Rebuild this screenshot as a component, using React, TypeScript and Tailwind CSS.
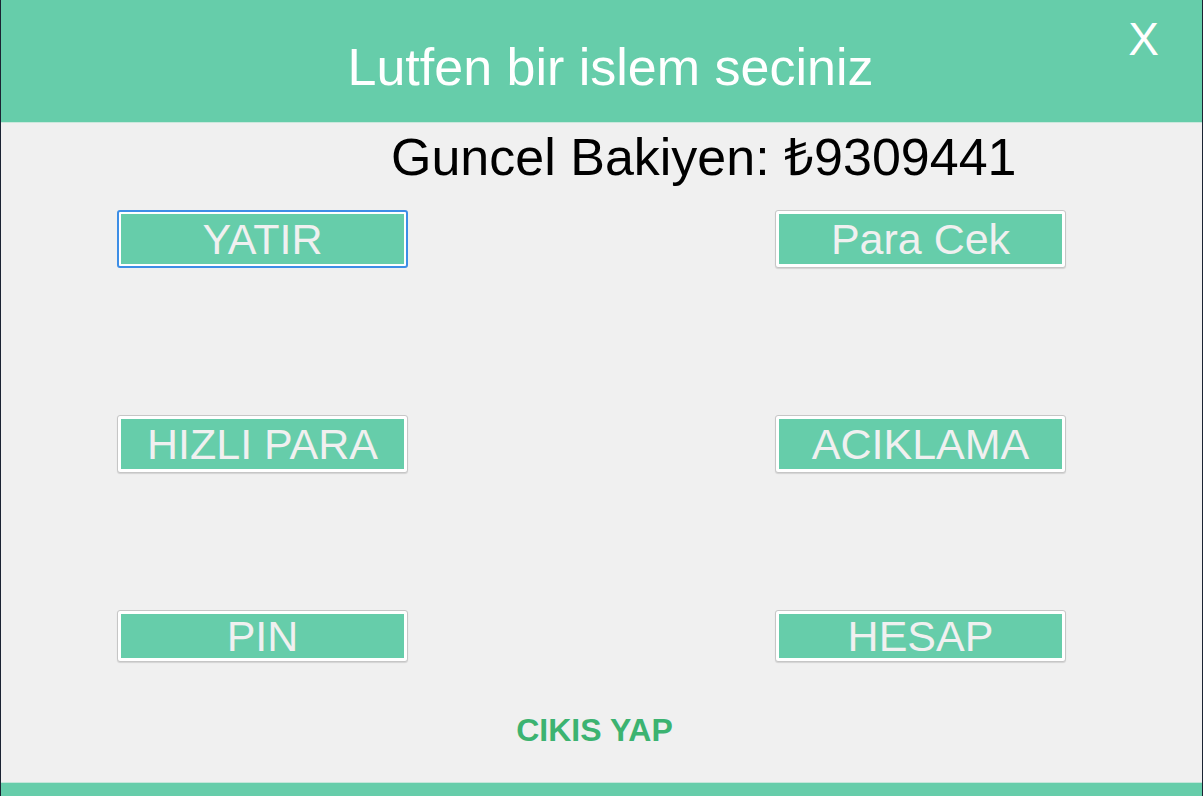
const actions = [
  [
    { label: 'YATIR', focused: true },
    { label: 'Para Cek', focused: false },
  ],
  [
    { label: 'HIZLI PARA', focused: false },
    { label: 'ACIKLAMA', focused: false },
  ],
  [
    { label: 'PIN', focused: false },
    { label: 'HESAP', focused: false },
  ],
]

const MenuButton = ({ label, focused, short }: { label: string; focused: boolean; short?: boolean }) => {
  return (
    <button
      className={
        focused
          ? 'w-[291px] rounded-[3px] border-2 border-[#3d8ee6] bg-white p-[2px] ' + (short ? 'h-[52px]' : 'h-[58px]')
          : 'w-[291px] rounded-[3px] border border-[#c6c6c6] bg-white p-[3px] shadow-[0_1px_1px_rgba(0,0,0,0.12)] ' + (short ? 'h-[52px]' : 'h-[58px]')
      }
    >
      <div className="flex h-full w-full items-center justify-center bg-[#66cdaa] text-[43px] leading-none text-[#f0f0f0]">
        {label}
      </div>
    </button>
  )
}

const App = () => {
  return (
    <div
      className="relative flex h-[796px] w-[1203px] flex-col overflow-hidden border-l border-r border-l-[#1b2333] border-r-[#1b2333] bg-[#f0f0f0]"
      style={{ fontFamily: '"Liberation Sans", Arial, sans-serif' }}
    >
      {/* header */}
      <div className="relative h-[123px] shrink-0 border-b border-[#cbe8dd] bg-[#66cdaa] pl-[18px] pt-[41px] text-center">
        <h1 className="text-[52px] leading-none text-white">Lutfen bir islem seciniz</h1>
        <button className="absolute right-[43px] top-[16px] text-[46px] leading-none text-white">X</button>
      </div>

      {/* balance */}
      <div className="mt-[8px] pl-[390px] text-[52px] leading-none text-black">Guncel Bakiyen: ₺9309441</div>

      {/* buttons */}
      <div className="mt-[27px] flex flex-col pl-[116px] pr-[136px]">
        <div className="flex justify-between">
          <MenuButton {...actions[0][0]} />
          <MenuButton {...actions[0][1]} />
        </div>
        <div className="mt-[147px] flex justify-between">
          <MenuButton {...actions[1][0]} />
          <MenuButton {...actions[1][1]} />
        </div>
        <div className="mt-[137px] flex justify-between">
          <MenuButton {...actions[2][0]} short />
          <MenuButton {...actions[2][1]} short />
        </div>
      </div>

      <div className="mt-[52px] pr-[14px] text-center text-[32px] font-bold leading-none text-[#3cb371]">CIKIS YAP</div>

      <div className="mt-auto h-[14px] shrink-0 border-t border-[#c4e6da] bg-[#66cdaa]" />
    </div>
  )
}

export default App
